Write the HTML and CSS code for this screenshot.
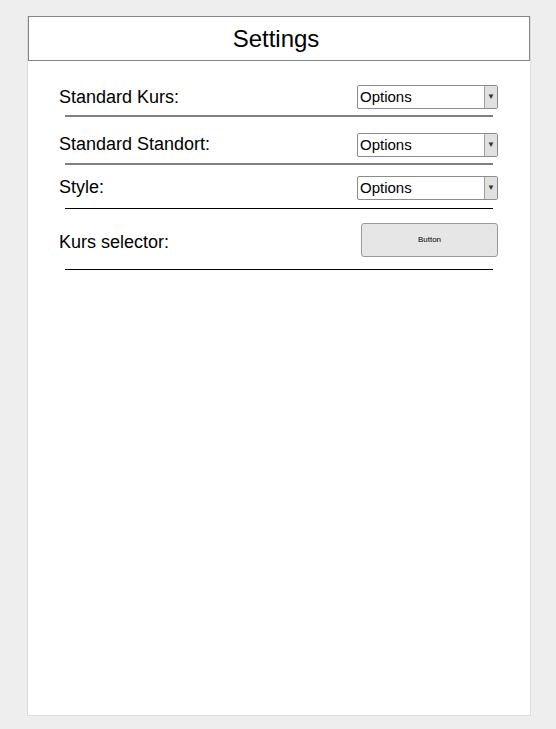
FILE: index.html
```html
<!DOCTYPE html>
<html>
<head>
<meta charset="utf-8">
<link rel="stylesheet" href="styles.css">
</head>
<body>
<div class="panel">
  <div class="header">Settings</div>
  <div class="content">
    <div class="row row1">
      <span class="label">Standard Kurs:</span>
      <div class="select"><span class="select-text">Options</span><span class="arrow">&#9660;</span></div>
    </div>
    <div class="line line-gray"></div>
    <div class="row row2">
      <span class="label">Standard Standort:</span>
      <div class="select"><span class="select-text">Options</span><span class="arrow">&#9660;</span></div>
    </div>
    <div class="line line-gray"></div>
    <div class="row row3">
      <span class="label">Style:</span>
      <div class="select"><span class="select-text">Options</span><span class="arrow">&#9660;</span></div>
    </div>
    <div class="line line-black"></div>
    <div class="row row4">
      <span class="label">Kurs selector:</span>
      <div class="button">Button</div>
    </div>
    <div class="line line-black line-last"></div>
  </div>
</div>
</body>
</html>
```

FILE: styles.css
```css
html, body {
  margin: 0;
  padding: 0;
  background: #eeeeee;
}
body {
  font-family: "Liberation Sans", Arial, sans-serif;
  color: #000;
}
.panel {
  margin: 16px 0 0 27px;
  width: 502px;
  height: 699px;
  background: #fff;
  border: 1px solid #dcdcdc;
  border-top: none;
}
.header {
  height: 43px;
  border: 1px solid #858585;
  text-align: center;
  font-size: 24px;
  line-height: 44px;
  padding-right: 6px;
}
.content {
  padding: 24px 32px 0 31px;
}
.row {
  display: flex;
  justify-content: space-between;
  align-items: center;
}
.label {
  font-size: 18px;
  line-height: 20px;
}
.row2 .label, .row3 .label {
  position: relative;
  top: -1px;
}
.row4 .label {
  position: relative;
  top: 2px;
}
.select {
  width: 139px;
  height: 22px;
  border: 1px solid #8c8c8c;
  border-radius: 2px;
  background: #fff;
  display: flex;
  align-items: stretch;
  overflow: hidden;
}
.select-text {
  flex: 1;
  font-size: 15px;
  line-height: 22px;
  padding-left: 2px;
}
.arrow {
  width: 12px;
  background: #e0e0e0;
  border-left: 1px solid #a0a0a0;
  font-size: 8px;
  line-height: 22px;
  text-align: center;
  color: #333;
}
.button {
  width: 135px;
  height: 32px;
  border: 1px solid #9a9a9a;
  border-radius: 3px;
  background: #e6e6e6;
  font-size: 8px;
  line-height: 32px;
  text-align: center;
  box-sizing: content-box;
}
.line {
  margin: 0 5px 0 6px;
}
.line-gray {
  height: 2px;
  background: #808080;
  margin-top: 6px;
}
.line-black {
  height: 1px;
  background: #000;
  margin-top: 8px;
}
.row2 { margin-top: 16px; }
.row3 { margin-top: 11px; }
.row4 { margin-top: 14px; }
.line-last { margin-top: 12px; }
```
